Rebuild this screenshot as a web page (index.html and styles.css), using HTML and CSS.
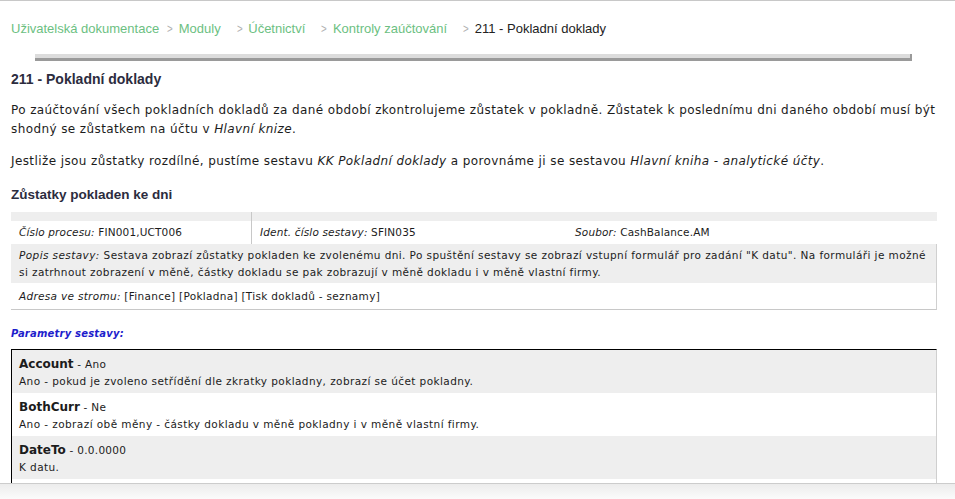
FILE: index.html
```html
<!DOCTYPE html>
<html lang="cs">
<head>
    <meta charset="UTF-8">
    <title>211 - Pokladní doklady</title>
    <link rel="stylesheet" href="styles.css">
</head>
<body>
    <nav class="breadcrumb"><a href="#">Uživatelská dokumentace</a><span class="sep">&gt;</span><a href="#" class="wide">Moduly</a><span class="sep">&gt;</span><a href="#" class="wide">Účetnictví</a><span class="sep">&gt;</span><a href="#" class="wide">Kontroly zaúčtování</a><span class="sep">&gt;</span><span class="current">211 - Pokladní doklady</span></nav>
    <div class="header-rule"></div>

    <main class="content">
        <h1>211 - Pokladní doklady</h1>
        <p>Po zaúčtování všech pokladních dokladů za dané období zkontrolujeme zůstatek v pokladně. Zůstatek k poslednímu dni daného období musí být shodný se zůstatkem na účtu v <em>Hlavní knize</em>.</p>
        <p>Jestliže jsou zůstatky rozdílné, pustíme sestavu <em>KK Pokladní doklady</em> a porovnáme ji se sestavou <em>Hlavní kniha - analytické účty</em>.</p>

        <h3>Zůstatky pokladen ke dni</h3>

        <div class="report-info">
            <div class="info-head"></div>
            <div class="info-row info-cols">
                <div class="col col-first"><i>Číslo procesu:</i> FIN001,UCT006</div>
                <div class="col col-mid"><i>Ident. číslo sestavy:</i> SFIN035</div>
                <div class="col"><i>Soubor:</i> CashBalance.AM</div>
            </div>
            <div class="info-row info-gray"><i>Popis sestavy:</i> Sestava zobrazí zůstatky pokladen ke zvolenému dni. Po spuštění sestavy se zobrazí vstupní formulář pro zadání "K datu". Na formuláři je možné si zatrhnout zobrazení v měně, částky dokladu se pak zobrazují v měně dokladu i v měně vlastní firmy.</div>
            <div class="info-row info-last"><i>Adresa ve stromu:</i> [Finance] [Pokladna] [Tisk dokladů - seznamy]</div>
        </div>

        <div class="params-title">Parametry sestavy:</div>
        <div class="params">
            <div class="param">
                <div class="param-name"><b>Account</b> - Ano</div>
                <div class="param-desc">Ano - pokud je zvoleno setřídění dle zkratky pokladny, zobrazí se účet pokladny.</div>
            </div>
            <div class="param">
                <div class="param-name"><b>BothCurr</b> - Ne</div>
                <div class="param-desc">Ano - zobrazí obě měny - částky dokladu v měně pokladny i v měně vlastní firmy.</div>
            </div>
            <div class="param">
                <div class="param-name"><b>DateTo</b> - 0.0.0000</div>
                <div class="param-desc">K datu.</div>
            </div>
            <div class="param param-empty"></div>
        </div>
    </main>

    <div class="bottom-shade"></div>
</body>
</html>
```

FILE: styles.css
```css
/* Base */
* {
    box-sizing: border-box;
}

body {
    margin: 0;
    border-top: 1px solid #c8c8c8;
    background: #fff;
    color: #1c1c1c;
    font-family: "DejaVu Sans", Verdana, sans-serif;
    font-size: 12px;
    letter-spacing: 0.4px;
}

/* Breadcrumb */
.breadcrumb {
    display: flex;
    padding: 20px 0 0 11px;
    height: 53px;
    font-family: "Liberation Sans", Arial, sans-serif;
    font-size: 13px;
    line-height: 16px;
    letter-spacing: 0;
    white-space: nowrap;
}

.breadcrumb a {
    color: #6cbf82;
    text-decoration: none;
}

.breadcrumb a.wide {
    margin-right: 8px;
}

.breadcrumb .sep {
    display: inline-block;
    margin: 0 5px 0 7px;
    color: #b0b0b0;
    transform: scaleX(0.75);
}

.breadcrumb .current {
    color: #222;
}

.header-rule {
    width: 877px;
    height: 7px;
    margin: 0 0 0 35px;
    background: #dcdcdc;
    border-bottom: 3px solid #9a9a9a;
    border-right: 2px solid #9a9a9a;
}

/* Content */
.content {
    padding: 0 18px 0 11px;
}

h1 {
    margin: 10px 0 0;
    font-family: "Liberation Sans", Arial, sans-serif;
    font-size: 14px;
    line-height: 17px;
    letter-spacing: 0;
    color: #2c2c3e;
}

p {
    margin: 13px 0 0;
    line-height: 19px;
}

p + p {
    margin-top: 13px;
}

h3 {
    margin: 15px 0 0;
    font-family: "Liberation Sans", Arial, sans-serif;
    font-size: 13.5px;
    line-height: 17px;
    letter-spacing: 0;
    color: #2c2c3e;
}

/* Report info table */
.report-info {
    margin-top: 9px;
    font-size: 10.5px;
    line-height: 17px;
    letter-spacing: 0.3px;
}

.info-head {
    height: 9px;
    background: #eeeeee;
}

.info-row {
    padding: 3px 8px;
}

.info-cols {
    display: flex;
    padding: 0;
    height: 23px;
    letter-spacing: 0.15px;
}

.info-cols .col {
    padding: 3px 8px 0;
}

.col-first {
    width: 241px;
    border-right: 1px solid #c8c8c8;
    margin-top: -9px;
    padding-top: 12px !important;
}

.col-mid {
    width: 315px;
}

.info-gray {
    background: #eeeeee;
    border-right: 1px solid #d0d0d0;
    padding: 3px 4px 2px 8px;
    height: 39px;
    letter-spacing: 0.41px;
}

.info-last {
    height: 27px;
    padding-top: 5px;
    border-right: 1px solid #d0d0d0;
    border-bottom: 1px solid #c8c8c8;
}

/* Parameters */
.params-title {
    margin-top: 17px;
    font-size: 10px;
    font-weight: bold;
    font-style: italic;
    color: #1e1ecc;
    line-height: 13px;
    letter-spacing: 0.2px;
}

.params {
    margin-top: 9px;
    border-top: 1px solid #000;
    border-left: 1px solid #000;
    border-right: 1px solid #cfcfcf;
}

.param {
    height: 43px;
    padding: 5px 7px 0;
}

.param:nth-child(odd) {
    background: #eeeeee;
}

.param-empty {
    height: 10px;
}

.param-name {
    font-size: 10.5px;
    line-height: 18px;
    letter-spacing: 0.3px;
}

.param-name b {
    font-size: 12px;
    letter-spacing: 0;
}

.param-desc {
    font-size: 10.5px;
    line-height: 16px;
    letter-spacing: 0.42px;
}

/* Bottom frame shade */
.bottom-shade {
    position: fixed;
    left: 0;
    right: 0;
    bottom: 0;
    height: 16px;
    border-top: 1px solid #cccccc;
    background: linear-gradient(#ececec, #fbfbfb);
}
```
